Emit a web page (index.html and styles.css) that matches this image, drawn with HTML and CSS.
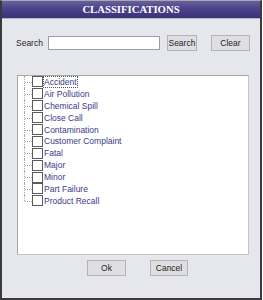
FILE: index.html
```html
<!DOCTYPE html>
<html lang="en">
<head>
    <meta charset="UTF-8" />
    <title>Classifications</title>
    <link rel="stylesheet" href="styles.css">
</head>
<body>
    <div class="dialog">
        <div class="titlebar">CLASSIFICATIONS</div>

        <div class="search-row">
            <label for="search">Search</label>
            <input type="text" id="search" />
            <button class="btn btn-search">Search</button>
            <button class="btn btn-clear">Clear</button>
        </div>

        <div class="listbox">
            <ul class="tree">
                <li><span class="box"></span><span class="label focus">Accident</span></li>
                <li><span class="box"></span><span class="label">Air Pollution</span></li>
                <li><span class="box"></span><span class="label">Chemical Spill</span></li>
                <li><span class="box"></span><span class="label">Close Call</span></li>
                <li><span class="box"></span><span class="label">Contamination</span></li>
                <li><span class="box"></span><span class="label">Customer Complaint</span></li>
                <li><span class="box"></span><span class="label">Fatal</span></li>
                <li><span class="box"></span><span class="label">Major</span></li>
                <li><span class="box"></span><span class="label">Minor</span></li>
                <li><span class="box"></span><span class="label">Part Failure</span></li>
                <li class="last"><span class="box"></span><span class="label">Product Recall</span></li>
            </ul>
        </div>

        <div class="footer">
            <button class="btn btn-ok">Ok</button>
            <button class="btn btn-cancel">Cancel</button>
        </div>
    </div>

    <div class="behind">
        <span class="behind-line"></span>
        <span class="folder"></span>
        <span class="behind-text">Photos</span>
    </div>
</body>
</html>
```

FILE: styles.css
```css
:root {
    --dialog-bg: #e6e6ed;
    --border-dark: #3b3b3f;
    --item-text: #3a3a86;
    --btn-bg: #dfdfe2;
    --btn-border: #b3b3b8;
}

body {
    margin: 0;
    background: #ffffff;
    font-family: 'Liberation Sans', Arial, sans-serif;
    font-size: 8.5px;
    color: #222;
    width: 263px;
    height: 300px;
    overflow: hidden;
}

.dialog {
    width: 258px;
    background-color: var(--dialog-bg);
    border: 2px solid var(--border-dark);
    border-top: 1px solid #a9a9ad;
}

.titlebar {
    height: 17px;
    line-height: 17px;
    text-align: center;
    color: #ffffff;
    font-family: 'Liberation Serif', 'Times New Roman', serif;
    font-weight: bold;
    font-size: 10.7px;
    background: linear-gradient(#675f9c, #4a4088 50%, #3b3278);
    border-bottom: 1px solid #b9b6cc;
}

.search-row {
    display: flex;
    align-items: center;
    margin-top: 16px;
    padding-left: 14px;
    height: 16px;
}

.search-row label {
    color: #2a2a2a;
    margin-right: 5px;
}

.search-row input {
    width: 112px;
    height: 14px;
    box-sizing: border-box;
    border: 1px solid #9d9da3;
    background: #fff;
    padding: 0;
    margin: 0 7px 0 0;
}

.btn {
    height: 16px;
    box-sizing: border-box;
    padding: 0;
    background-color: var(--btn-bg);
    border: 1px solid var(--btn-border);
    font-family: 'Liberation Sans', Arial, sans-serif;
    font-size: 8.5px;
    color: #222;
}

.btn-search {
    width: 30px;
    margin-right: 14px;
}

.btn-clear {
    width: 39px;
}

.listbox {
    margin: 24px 0 0 15px;
    width: 232px;
    height: 180px;
    box-sizing: border-box;
    background: #ffffff;
    border: 1px solid #a6a6ab;
    border-right-color: #c4c4c8;
    border-bottom-color: #c4c4c8;
}

.tree {
    list-style: none;
    margin: 0;
    padding: 0 0 0 6px;
}

.tree li {
    position: relative;
    display: flex;
    align-items: center;
    height: 11.9px;
    padding-left: 7px;
    border-left: 1px dotted #a8a8a8;
}

.tree li.last {
    border-left-color: transparent;
}

.tree li::before {
    content: "";
    position: absolute;
    left: 0;
    top: 6px;
    width: 7px;
    border-top: 1px dotted #a8a8a8;
}

.tree li.last::after {
    content: "";
    position: absolute;
    left: -1px;
    top: 0;
    height: 6px;
    border-left: 1px dotted #a8a8a8;
}

.box {
    width: 9px;
    height: 9px;
    border: 1px solid #5a5a5a;
    background: #fff;
    flex: none;
}

.label {
    color: var(--item-text);
    margin-left: 0;
    padding: 0;
    line-height: 10px;
    border: 1px solid transparent;
}

.label.focus {
    border: 1px dotted #555;
}

.footer {
    display: flex;
    gap: 24px;
    padding: 5px 0 22px 85px;
}

.btn-ok {
    width: 39px;
}

.btn-cancel {
    width: 38px;
}

.behind {
    display: flex;
    align-items: flex-start;
    height: 3px;
    padding-left: 204px;
    overflow: hidden;
}

.behind-line {
    width: 1px;
    height: 3px;
    background: #9a9a9a;
    margin-right: 2px;
}

.folder {
    width: 10px;
    height: 3px;
    background: #e8c65a;
    margin-right: 3px;
}

.behind-text {
    font-size: 9px;
    line-height: 9px;
    margin-top: -4px;
    color: #222;
}
```
